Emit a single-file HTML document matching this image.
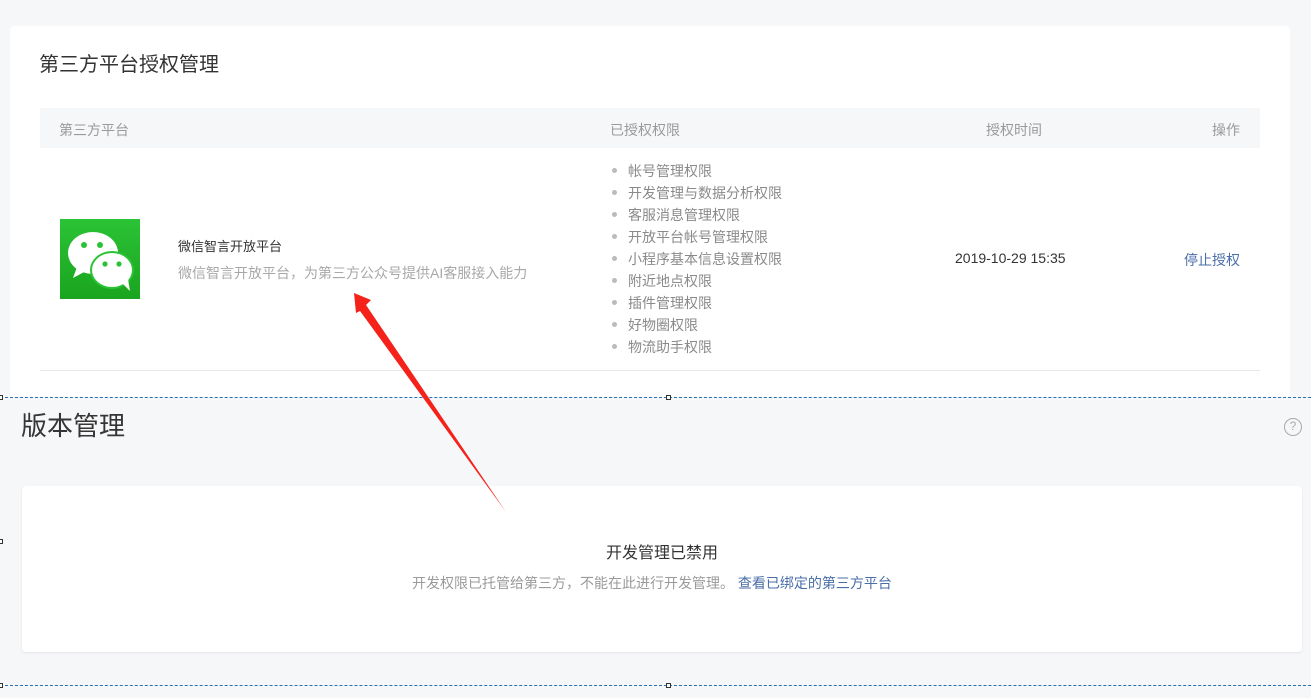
<!DOCTYPE html>
<html><head><meta charset="utf-8"><style>
*{margin:0;padding:0;box-sizing:border-box}
body{width:1311px;height:698px;background:#f6f7f9;font-family:"Liberation Sans","Noto Sans CJK SC",sans-serif;position:relative;overflow:hidden}
.a{position:absolute;white-space:nowrap}
.card{position:absolute;left:10px;top:26px;width:1280px;height:380px;background:#fff;border-radius:4px}
.th{position:absolute;left:40px;top:108px;width:1220px;height:40px;background:#f6f7f9}
.th span{position:absolute;top:12px;font-size:14px;color:#9a9a9a}
ul{position:absolute;left:612px;top:162px;list-style:none}
li{font-size:14px;color:#8a8a8a;height:22px;line-height:18px}
li:before{content:"";display:inline-block;width:5px;height:5px;border-radius:50%;background:#bbb;margin-right:11px;vertical-align:middle;position:relative;top:-2px}
.dash{position:absolute;left:0;width:1311px;border-top:1px dashed #2a6fb5}
.sq{position:absolute;width:5px;height:5px;border:1px solid #333;background:#fff}
</style></head><body>
<div class="card"></div>
<div class="a" style="left:39px;top:48px;font-size:20px;color:#333">第三方平台授权管理</div>
<div class="th"><span style="left:19px">第三方平台</span><span style="left:570px">已授权权限</span><span style="left:946px">授权时间</span><span style="right:20px">操作</span></div>
<div class="a" style="left:60px;top:219px;width:80px;height:80px;background:linear-gradient(#2bc336,#1aa41f)">
<svg width="80" height="80" viewBox="0 0 80 80"><ellipse cx="33" cy="34" rx="25" ry="21" fill="#fff"/><path d="M17 48 L13 59 L26 52Z" fill="#fff"/><circle cx="24" cy="26" r="3" fill="#2bc336"/><circle cx="40" cy="26" r="3" fill="#2bc336"/><ellipse cx="52" cy="51" rx="22" ry="19" fill="#2bc336"/><ellipse cx="52" cy="51" rx="20" ry="17" fill="#fff"/><path d="M62 64 L70 72 L68 60Z" fill="#fff"/><circle cx="45" cy="45" r="2.6" fill="#2bc336"/><circle cx="59" cy="45" r="2.6" fill="#2bc336"/></svg></div>
<div class="a" style="left:178px;top:236px;font-size:13px;color:#333">微信智言开放平台</div>
<div class="a" style="left:178px;top:263px;font-size:14px;color:#a8a8a8">微信智言开放平台，为第三方公众号提供AI客服接入能力</div>
<ul><li>帐号管理权限</li><li>开发管理与数据分析权限</li><li>客服消息管理权限</li><li>开放平台帐号管理权限</li><li>小程序基本信息设置权限</li><li>附近地点权限</li><li>插件管理权限</li><li>好物圈权限</li><li>物流助手权限</li></ul>
<div class="a" style="left:955px;top:250px;font-size:14px;color:#333">2019-10-29 15:35</div>
<div class="a" style="left:1184px;top:250px;font-size:14px;color:#4a6ea8">停止授权</div>
<div class="a" style="left:40px;top:370px;width:1220px;border-top:1px solid #e8e8e8"></div>
<div class="a" style="left:0;top:397px;width:1311px;height:290px;background:#f6f7f9"></div>
<div class="dash" style="top:397px"></div><div class="dash" style="top:685px"></div>
<div class="sq" style="left:-2px;top:395px"></div><div class="sq" style="left:666px;top:395px"></div><div class="sq" style="left:-2px;top:539px"></div><div class="sq" style="left:-2px;top:683px"></div><div class="sq" style="left:666px;top:683px"></div>
<div class="a" style="left:21px;top:406px;font-size:26px;color:#353535">版本管理</div>
<div class="a" style="left:1284px;top:418px;width:18px;height:18px;border:1.5px solid #aaa;border-radius:50%;font-size:12px;color:#aaa;text-align:center;line-height:15px">?</div>
<div class="a" style="left:22px;top:486px;width:1280px;height:166px;background:#fff;border-radius:4px;box-shadow:0 1px 2px rgba(0,0,0,.08)"></div>
<div class="a" style="left:606px;top:539px;font-size:16px;color:#333">开发管理已禁用</div>
<div class="a" style="left:412px;top:573px;font-size:14px;color:#9a9a9a">开发权限已托管给第三方，不能在此进行开发管理。 <span style="color:#4a6ea8">查看已绑定的第三方平台</span></div>
<svg class="a" style="left:0;top:0" width="1311" height="698"><path d="M354 293 L371 300 L366 305 L506 512 L360 311 L356 313Z" fill="#f5221b"/></svg>
</body></html>
